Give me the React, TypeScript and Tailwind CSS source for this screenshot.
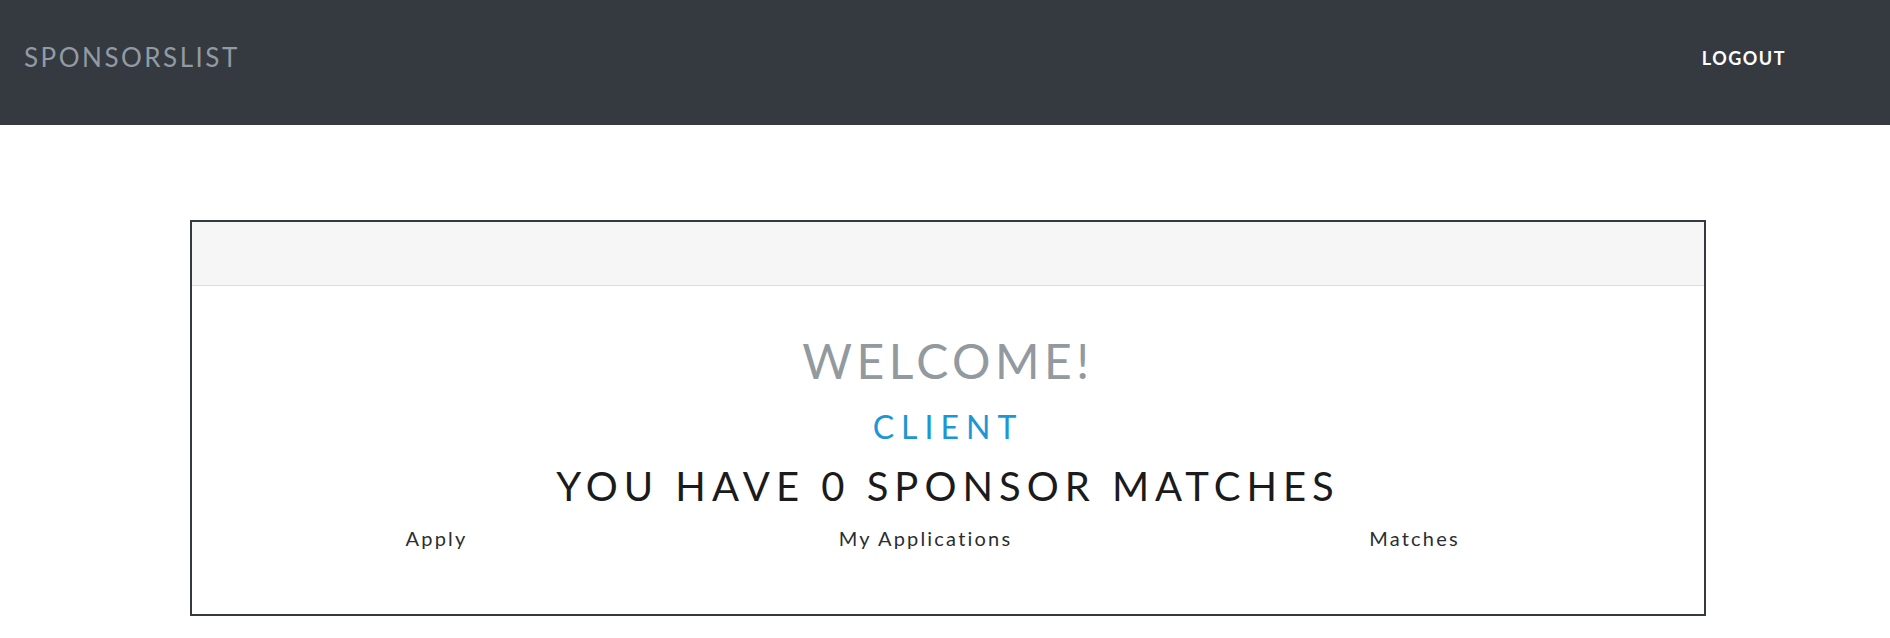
const font = { fontFamily: 'Lato, "Open Sans", sans-serif' }

function Navbar() {
  return (
    <nav className="flex h-[125px] items-start justify-between bg-[#343a40] pl-[24px] pr-[104px]">
      <a className="mt-[41px] text-[26px] leading-[32px] tracking-[2.5px] text-[#929ba4]">
        SPONSORSLIST
      </a>
      <a className="mt-[46px] text-[18px] font-bold leading-[24px] tracking-[1.5px] text-white">
        LOGOUT
      </a>
    </nav>
  )
}

export default function App() {
  return (
    <div className="min-h-screen bg-white" style={font}>
      <Navbar />

      <main className="px-[190px] pt-[95px]">
        <div className="w-[1516px] border-2 border-[#343a40] bg-white">
          <div className="h-[64px] border-b border-[#dcdcdc] bg-[#f6f6f6]" />

          <div className="flex flex-col items-center pb-[61px] pt-[46px] text-center">
            <h1 className="text-[48px] leading-[58px] tracking-[4.5px] text-[#92999f]">
              WELCOME!
            </h1>
            <h2 className="mt-[17px] text-[32px] leading-[40px] tracking-[7px] text-[#1d97d4]">
              CLIENT
            </h2>
            <h2 className="mt-[15px] text-[40px] leading-[48px] tracking-[6px] text-[#1b1b1b]">
              YOU HAVE 0 SPONSOR MATCHES
            </h2>

            <div className="mt-[13px] grid w-[1467px] grid-cols-3 self-start text-[20px] leading-[30px] tracking-[2.2px] text-[#2a2d31]">
              <a>Apply</a>
              <a>My Applications</a>
              <a>Matches</a>
            </div>
          </div>
        </div>
      </main>
    </div>
  )
}
